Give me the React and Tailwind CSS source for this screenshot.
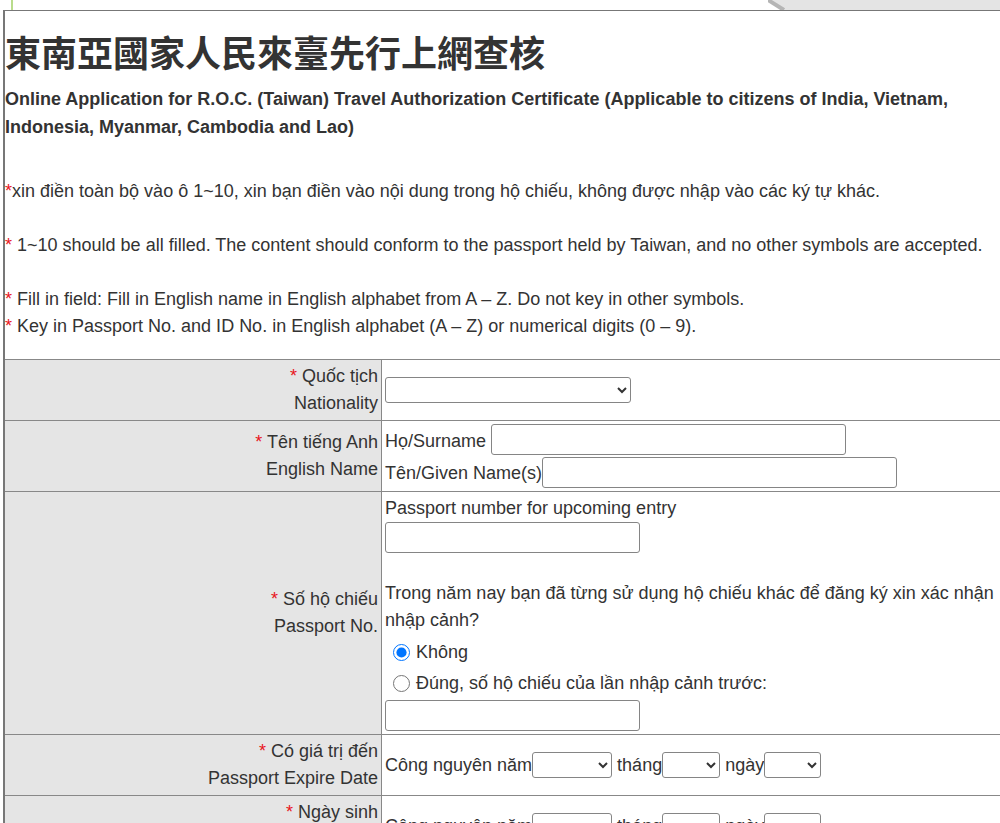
import React from "react"

const Star = () => <span className="text-[#e8141c]">*</span>

function Label({ vi, en }) {
  return (
    <div className="w-[377px] shrink-0 bg-[#e5e5e5] border-r border-[#888] p-[3px] flex flex-col justify-center text-right leading-[27px]">
      <div>
        <Star /> {vi}
      </div>
      <div>{en}</div>
    </div>
  )
}

function TextInput({ className }) {
  return <input type="text" className={"h-[31px] border border-[#858585] rounded-[3px] bg-white " + className} />
}

function Select({ className }) {
  return (
    <select className={"h-[26px] border border-[#858585] rounded-[3px] bg-white text-[16px] " + className}>
      <option></option>
    </select>
  )
}

function DateLine() {
  return (
    <div className="flex items-center">
      <span>Công nguyên năm</span>
      <Select className="w-[80px]" />
      <span className="ml-[5px]">tháng</span>
      <Select className="w-[58px]" />
      <span className="ml-[5px]">ngày</span>
      <Select className="w-[57px]" />
    </div>
  )
}

export default function App() {
  return (
    <div className="w-[1000px] h-[823px] overflow-hidden bg-white text-[#333] font-['Liberation_Sans','Noto_Sans_CJK_TC',sans-serif]">
      {/* top strip */}
      <div className="h-[10px] flex">
        <div className="ml-[11px] w-[2px] bg-[#b9dc8c]" />
        <div className="flex-1" />
        <svg width="232" height="10" viewBox="0 0 232 10" className="block">
          <polygon points="0,0 232,0 232,10 17,10" fill="#e4e4e4" />
          <line x1="0" y1="0" x2="16" y2="10" stroke="#b5b5b5" strokeWidth="4" />
        </svg>
      </div>

      <div className="ml-[3px] border-t border-l-2 border-[#777] h-full">
        <h1 className="mt-[18px] text-[36px] leading-[44px] font-bold font-['Noto_Sans_CJK_TC','Liberation_Sans',sans-serif]">
          東南亞國家人民來臺先行上網查核
        </h1>
        <p className="mt-[12px] text-[18px] font-bold leading-[28px]">
          Online Application for R.O.C. (Taiwan) Travel Authorization Certificate (Applicable to citizens of India, Vietnam,
          Indonesia, Myanmar, Cambodia and Lao)
        </p>

        <div className="mt-[37px] text-[18px] leading-[27px]">
          <p>
            <Star />xin điền toàn bộ vào ô 1~10, xin bạn điền vào nội dung trong hộ chiếu, không được nhập vào các ký tự khác.
          </p>
          <p className="mt-[27px]">
            <Star /> 1~10 should be all filled. The content should conform to the passport held by Taiwan, and no other symbols are accepted.
          </p>
          <p className="mt-[27px]">
            <Star /> Fill in field: Fill in English name in English alphabet from A – Z. Do not key in other symbols.
          </p>
          <p>
            <Star /> Key in Passport No. and ID No. in English alphabet (A – Z) or numerical digits (0 – 9).
          </p>
        </div>

        <div className="mt-[19px] w-[1000px] text-[18px] leading-[27px]">
          <div className="flex border-t border-[#888] h-[61px]">
            <Label vi="Quốc tịch" en="Nationality" />
            <div className="flex-1 p-[3px] flex items-center">
              <Select className="w-[246px]" />
            </div>
          </div>

          <div className="flex border-t border-[#888] h-[71px]">
            <Label vi="Tên tiếng Anh" en="English Name" />
            <div className="flex-1 p-[3px] flex flex-col">
              <div className="h-[32px] flex items-start">
                <span className="mt-[4px]">Họ/Surname</span>
                <TextInput className="ml-[5px] w-[355px]" />
              </div>
              <div className="h-[32px] flex items-end">
                <span className="mb-[1px]">Tên/Given Name(s)</span>
                <TextInput className="w-[355px]" />
              </div>
            </div>
          </div>

          <div className="flex border-t border-[#888] h-[243px]">
            <Label vi="Số hộ chiếu" en="Passport No." />
            <div className="flex-1 p-[3px] pr-[10px] flex flex-col">
              <div>Passport number for upcoming entry</div>
              <TextInput className="w-[255px]" />
              <div className="mt-[27px]">
                Trong năm nay bạn đã từng sử dụng hộ chiếu khác để đăng ký xin xác nhận nhập cảnh?
              </div>
              <label className="mt-[3px] h-[31px] flex items-center">
                <input type="radio" name="prev" defaultChecked className="w-[17px] h-[17px] ml-[8px] mr-[6px] accent-[#0075ff]" />
                Không
              </label>
              <label className="h-[31px] flex items-center">
                <input type="radio" name="prev" className="w-[17px] h-[17px] ml-[8px] mr-[6px]" />
                Đúng, số hộ chiếu của lần nhập cảnh trước:
              </label>
              <TextInput className="mt-[1px] w-[255px]" />
            </div>
          </div>

          <div className="flex border-t border-[#888] h-[61px]">
            <Label vi="Có giá trị đến" en="Passport Expire Date" />
            <div className="flex-1 p-[3px] flex items-center">
              <DateLine />
            </div>
          </div>

          <div className="flex border-t border-[#888] h-[61px]">
            <Label vi="Ngày sinh" en="Date of Birth" />
            <div className="flex-1 p-[3px] flex items-center">
              <DateLine />
            </div>
          </div>
        </div>
      </div>
    </div>
  )
}
